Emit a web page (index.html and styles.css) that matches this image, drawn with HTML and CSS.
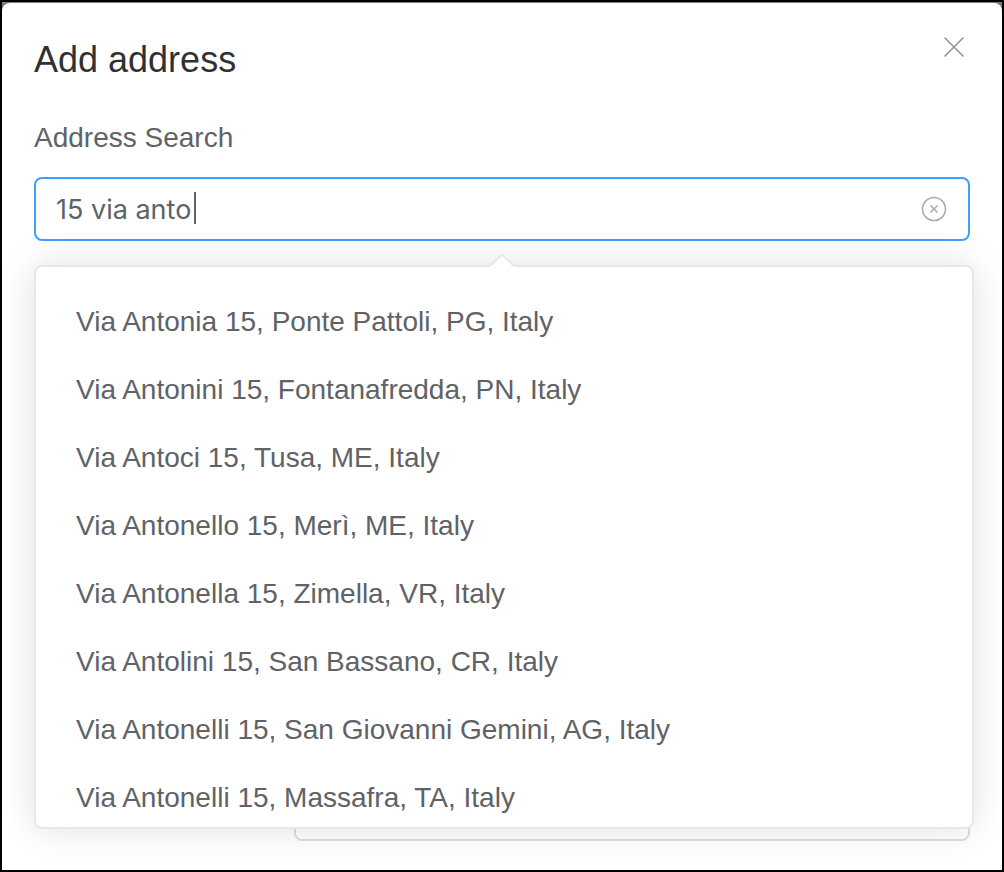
FILE: index.html
```html
<!DOCTYPE html>
<html lang="en">
<head>
<meta charset="utf-8">
<title>Add address</title>
<link rel="stylesheet" href="styles.css">
</head>
<body>
<main class="dialog" role="dialog" aria-labelledby="dialog-title">
  <header class="dialog-header">
    <h1 class="dialog-title" id="dialog-title">Add address</h1>
    <button class="close-button" type="button" aria-label="Close">
      <svg class="close-icon" viewBox="0 0 20 20" aria-hidden="true"><path d="M1 1 19 19M19 1 1 19"/></svg>
    </button>
  </header>
  <form class="address-form">
    <label class="field-label" for="address-search">Address Search</label>
    <div class="search">
      <input class="search-input" id="address-search" type="text" value="15 via anto" autocomplete="off">
      <span class="caret"></span>
      <button class="clear-button" type="button" aria-label="Clear">
        <svg class="clear-icon" viewBox="0 0 26 26" aria-hidden="true"><circle cx="13" cy="13" r="11.5"/><path d="M9.5 9.5 16.5 16.5M16.5 9.5 9.5 16.5"/></svg>
      </button>
      <div class="suggestions">
        <svg class="arrow" viewBox="0 0 26 13" aria-hidden="true"><path class="arrow-fill" d="M0 13 11.5 2Q13 .5 14.5 2L26 13Z"/><path class="arrow-line" d="M1 12 11.5 2Q13 .5 14.5 2L25 12"/></svg>
        <ul class="suggestion-list">
          <li class="suggestion">Via Antonia 15, Ponte Pattoli, PG, Italy</li>
          <li class="suggestion">Via Antonini 15, Fontanafredda, PN, Italy</li>
          <li class="suggestion">Via Antoci 15, Tusa, ME, Italy</li>
          <li class="suggestion">Via Antonello 15, Merì, ME, Italy</li>
          <li class="suggestion">Via Antonella 15, Zimella, VR, Italy</li>
          <li class="suggestion">Via Antolini 15, San Bassano, CR, Italy</li>
          <li class="suggestion">Via Antonelli 15, San Giovanni Gemini, AG, Italy</li>
          <li class="suggestion">Via Antonelli 15, Massafra, TA, Italy</li>
        </ul>
      </div>
    </div>
    <input class="detail-input" type="text" aria-label="Address detail">
  </form>
</main>
</body>
</html>
```
FILE: styles.css
```css
* {
  box-sizing: border-box;
}

body {
  margin: 0;
  min-height: 100vh;
  display: flex;
  border: 2px solid #000;
  padding-top: 1px;
  background: #7b7b7b;
  color: #606266;
  font-family: "Liberation Sans", Arial, sans-serif;
  font-size: 28px;
}

.dialog {
  flex: 1;
  padding: 33px 32px 28px;
  border-radius: 8px 8px 0 0;
  background: #fff;
}

.dialog-header {
  display: flex;
  justify-content: space-between;
  align-items: flex-start;
}

.dialog-title {
  margin: 0;
  color: #303133;
  font-size: 36px;
  font-weight: 400;
  line-height: 48px;
}

.close-button,
.clear-button {
  display: flex;
  padding: 0;
  border: 0;
  background: none;
}

.close-button {
  margin-right: 6px;
  padding-top: 1px;
}

.close-icon {
  width: 20px;
  height: 20px;
  fill: none;
  stroke: #909399;
  stroke-width: 1.6;
  stroke-linecap: round;
}

.address-form {
  display: flex;
  flex-direction: column;
  padding-top: 16px;
}

.field-label {
  padding-bottom: 1px;
  line-height: 76px;
}

.search {
  position: relative;
}

.search-input,
.detail-input {
  display: block;
  height: 64px;
  padding: 0 60px 0 20px;
  border: 2px solid #dcdfe6;
  border-radius: 8px;
  background: #fff;
  color: inherit;
  outline: 0;
}

.search-input {
  width: 100%;
  border-color: #409eff;
  font: 27px Inter, sans-serif;
}

.detail-input {
  margin: 536px 0 0 260px;
}

.caret {
  position: absolute;
  top: 15px;
  left: 160px;
  width: 2px;
  height: 32px;
  background: #606266;
}

.clear-button {
  position: absolute;
  top: 19px;
  right: 23px;
}

.clear-icon {
  width: 26px;
  height: 26px;
  fill: none;
  stroke: #a8abb2;
  stroke-width: 1.6;
}

.suggestions {
  position: absolute;
  z-index: 1;
  top: 88px;
  left: 0;
  right: -4px;
  border: 2px solid #e4e7ed;
  border-radius: 8px;
  background: #fff;
  box-shadow: 0 0 36px rgba(0, 0, 0, 0.12);
}

.arrow {
  position: absolute;
  top: -13px;
  left: calc(50% - 15px);
  width: 26px;
  height: 13px;
}

.arrow-fill {
  fill: #fff;
}

.arrow-line {
  fill: none;
  stroke: #e4e7ed;
  stroke-width: 2;
}

.suggestion-list {
  max-height: 560px;
  margin: 0;
  padding: 21px 0;
  overflow: hidden;
  list-style: none;
}

.suggestion {
  padding: 0 40px;
  line-height: 68px;
  white-space: nowrap;
  overflow: hidden;
  text-overflow: ellipsis;
}
```
